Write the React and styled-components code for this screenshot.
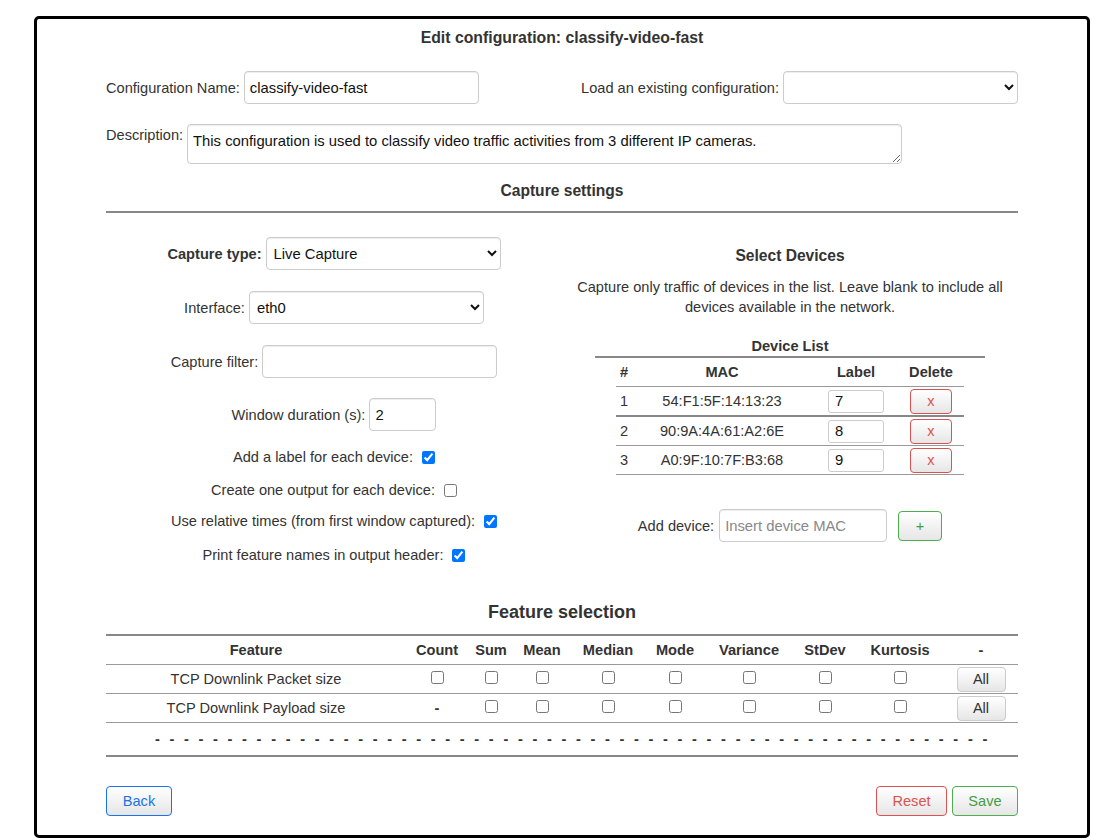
import React from 'react';
import styled, { createGlobalStyle, css } from 'styled-components';

const GlobalStyle = createGlobalStyle`
body {
    margin: 0;
    background: #fff;
    font-family: "Liberation Sans", Arial, sans-serif;
    font-size: 14.6px;
    color: #333;
}
`

const Page = styled.div`
padding: 16px 0 0 34px;
`

const Panel = styled.div`
box-sizing: border-box;
width: 1056px;
height: 822px;
border: 3px solid #000;
border-radius: 5px;
padding: 9px 69px 19px;
display: flex;
flex-direction: column;
`

const Title = styled.h2`
margin: 0;
font-size: 15.8px;
line-height: 20px;
font-weight: bold;
text-align: center;
color: #333;
`

const SectionTitle = styled.h3`
margin: ${p => p.$mt || 0}px 0 0;
font-size: ${p => p.$size || 15.6}px;
line-height: ${p => p.$lh || 20}px;
font-weight: bold;
text-align: center;
color: #333;
`

const Rule = styled.hr`
margin: 10px 0 0;
border: 0;
border-top: 2px solid #888;
`

const TopRow = styled.div`
display: grid;
grid-template-columns: 1fr 1fr;
margin-top: 23px;
`

const Field = styled.div`
display: flex;
align-items: ${p => p.$top ? 'flex-start' : 'center'};
justify-content: ${p => p.$end ? 'flex-end' : p.$center ? 'center' : 'flex-start'};
gap: 4px;
`

const Label = styled.label`
font-size: 14.6px;
font-weight: ${p => p.$bold ? 'bold' : 'normal'};
color: #333;
white-space: nowrap;
${p => p.$top && css`padding-top: 3px;`}
`

const inputBase = css`
box-sizing: border-box;
height: 33px;
border: 1px solid #ccc;
border-radius: 4px;
background: #fff;
box-shadow: inset 0 1px 1px rgba(0, 0, 0, 0.075);
font-family: "Liberation Sans", Arial, sans-serif;
font-size: 14.8px;
color: #111;
padding: 0 5px;
outline: none;
`

const TextInput = styled.input`
${inputBase}
width: ${p => p.$w || 235}px;
&::placeholder {
    color: #888;
}
`

const Select = styled.select`
${inputBase}
width: ${p => p.$w || 235}px;
padding: 0 3px;
`

const TextArea = styled.textarea`
${inputBase}
width: 715px;
height: 40px;
padding: 8px 5px 6px;
resize: vertical;
`

const DescRow = styled.div`
margin-top: 20px;
`

const Columns = styled.div`
display: grid;
grid-template-columns: 1fr 1fr;
margin-top: 24px;
`

const LeftCol = styled.div`
display: flex;
flex-direction: column;
align-items: center;
`

const InputRow = styled(Field)`
margin-top: ${p => p.$mt ?? 21}px;
`

const CheckRow = styled.div`
display: flex;
align-items: center;
justify-content: center;
gap: 9px;
height: 20px;
margin-top: ${p => p.$mt ?? 13}px;
`

const Check = styled.input.attrs({ type: 'checkbox' })`
margin: 0;
width: 13px;
height: 13px;
`

const RightCol = styled.div`
display: flex;
flex-direction: column;
align-items: center;
`

const Note = styled.p`
margin: 11px 0 0;
line-height: 20px;
text-align: center;
width: 440px;
`

const DeviceCaption = styled.div`
margin-top: 19px;
width: 390px;
text-align: center;
font-weight: bold;
line-height: 20px;
border-bottom: 2px solid #888;
`

const DeviceTable = styled.table`
width: 348px;
table-layout: fixed;
border-collapse: collapse;
`

const DTh = styled.th`
height: 28px;
padding: 0;
font-weight: bold;
text-align: ${p => p.$align || 'center'};
padding-left: ${p => p.$pl || 0}px;
padding-right: ${p => p.$pr || 0}px;
width: ${p => p.$w}px;
border-bottom: 1px solid #999;
`

const DTr = styled.tr`
border-bottom: ${p => p.$thick ? '2px solid #888' : '1px solid #999'};
`

const DTd = styled.td`
height: 28px;
padding: 0;
text-align: ${p => p.$align || 'center'};
padding-left: ${p => p.$pl || 0}px;
padding-right: ${p => p.$pr || 0}px;
white-space: nowrap;
`

const SmallInput = styled.input`
box-sizing: border-box;
width: 56px;
height: 23px;
border: 1px solid #ccc;
border-radius: 3px;
font-family: "Liberation Sans", Arial, sans-serif;
font-size: 14.8px;
padding: 0 6px;
color: #111;
vertical-align: middle;
`

const tones = {
    default: { border: '#ccc', color: '#333' },
    blue: { border: '#1a73e8', color: '#1a73e8' },
    red: { border: '#d9534f', color: '#d9534f' },
    green: { border: '#4cae4c', color: '#449d44' },
}

const Button = styled.button`
box-sizing: border-box;
width: ${p => p.$w}px;
height: ${p => p.$h || 30}px;
padding: 0;
border: 1px solid ${p => tones[p.$tone || 'default'].border};
color: ${p => tones[p.$tone || 'default'].color};
border-radius: 4px;
background-image: linear-gradient(to bottom, #fff 0%, #e6e6e6 100%);
font-family: "Liberation Sans", Arial, sans-serif;
font-size: 14.6px;
vertical-align: middle;
cursor: pointer;
`

const AddRow = styled(Field)`
margin-top: 34px;
gap: 5px;
`

const PlusButton = styled(Button)`
margin-left: 6px;
`

const FeatureTable = styled.table`
margin-top: 11px;
width: 100%;
border-collapse: collapse;
border-top: 2px solid #888;
border-bottom: 2px solid #888;
`

const FTh = styled.th`
height: 28px;
padding: 0;
font-weight: bold;
text-align: center;
width: ${p => p.$w}px;
border-bottom: 1px solid #999;
`

const FTr = styled.tr`
border-bottom: 1px solid #999;
`

const FTd = styled.td`
height: 28px;
padding: 0;
text-align: center;
vertical-align: middle;
`

const DotsCell = styled.td`
height: 32px;
padding: 0 30px 0 49px;
`

const Dots = styled.div`
display: flex;
justify-content: space-between;
font-weight: bold;
color: #333;
`

const Footer = styled.div`
display: flex;
justify-content: space-between;
align-items: center;
margin-top: 29px;
`

const FooterRight = styled.div`
display: flex;
gap: 5px;
`

const devices = [
    { mac: '54:F1:5F:14:13:23', label: '7' },
    { mac: '90:9A:4A:61:A2:6E', label: '8' },
    { mac: 'A0:9F:10:7F:B3:68', label: '9' },
]

const columns = [
    { name: 'Feature', w: 300 },
    { name: 'Count', w: 62 },
    { name: 'Sum', w: 46 },
    { name: 'Mean', w: 56 },
    { name: 'Median', w: 76 },
    { name: 'Mode', w: 58 },
    { name: 'Variance', w: 90 },
    { name: 'StDev', w: 62 },
    { name: 'Kurtosis', w: 88 },
    { name: '-', w: 74 },
]

const features = [
    { name: 'TCP Downlink Packet size', count: true },
    { name: 'TCP Downlink Payload size', count: false },
]

export default function App() {
    return (
        <Page>
            <GlobalStyle />
            <Panel>
                <Title>Edit configuration: classify-video-fast</Title>

                <TopRow>
                    <Field>
                        <Label>Configuration Name:</Label>
                        <TextInput defaultValue='classify-video-fast' />
                    </Field>
                    <Field $end>
                        <Label>Load an existing configuration:</Label>
                        <Select defaultValue=''>
                            <option value=''></option>
                        </Select>
                    </Field>
                </TopRow>

                <DescRow>
                    <Field $top>
                        <Label $top>Description:</Label>
                        <TextArea defaultValue='This configuration is used to classify video traffic activities from 3 different IP cameras.' />
                    </Field>
                </DescRow>

                <SectionTitle $mt={17}>Capture settings</SectionTitle>
                <Rule />

                <Columns>
                    <LeftCol>
                        <InputRow $mt={0}>
                            <Label $bold>Capture type:</Label>
                            <Select defaultValue='live'>
                                <option value='live'>Live Capture</option>
                            </Select>
                        </InputRow>
                        <InputRow>
                            <Label>Interface:</Label>
                            <Select defaultValue='eth0'>
                                <option value='eth0'>eth0</option>
                            </Select>
                        </InputRow>
                        <InputRow>
                            <Label>Capture filter:</Label>
                            <TextInput />
                        </InputRow>
                        <InputRow $mt={20}>
                            <Label>Window duration (s):</Label>
                            <TextInput $w={67} defaultValue='2' />
                        </InputRow>
                        <CheckRow $mt={16}>
                            <Label>Add a label for each device:</Label>
                            <Check defaultChecked />
                        </CheckRow>
                        <CheckRow>
                            <Label>Create one output for each device:</Label>
                            <Check />
                        </CheckRow>
                        <CheckRow $mt={11}>
                            <Label>Use relative times (from first window captured):</Label>
                            <Check defaultChecked />
                        </CheckRow>
                        <CheckRow $mt={14}>
                            <Label>Print feature names in output header:</Label>
                            <Check defaultChecked />
                        </CheckRow>
                    </LeftCol>

                    <RightCol>
                        <SectionTitle $mt={9}>Select Devices</SectionTitle>
                        <Note>Capture only traffic of devices in the list. Leave blank to include all devices available in the network.</Note>
                        <DeviceCaption>Device List</DeviceCaption>
                        <DeviceTable>
                            <colgroup>
                                <col style={{ width: 22 }} />
                                <col style={{ width: 168 }} />
                                <col style={{ width: 100 }} />
                                <col style={{ width: 58 }} />
                            </colgroup>
                            <thead>
                                <tr>
                                    <DTh $align='left' $pl={4}>#</DTh>
                                    <DTh>MAC</DTh>
                                    <DTh>Label</DTh>
                                    <DTh $pr={8}>Delete</DTh>
                                </tr>
                            </thead>
                            <tbody>
                                {devices.map((d, i) => (
                                    <DTr key={d.mac} $thick={i === 0}>
                                        <DTd $align='left' $pl={4}>{i + 1}</DTd>
                                        <DTd>{d.mac}</DTd>
                                        <DTd><SmallInput defaultValue={d.label} /></DTd>
                                        <DTd $pr={8}><Button $tone='red' $w={42} $h={25}>x</Button></DTd>
                                    </DTr>
                                ))}
                            </tbody>
                        </DeviceTable>
                        <AddRow>
                            <Label>Add device:</Label>
                            <TextInput $w={168} placeholder='Insert device MAC' />
                            <PlusButton $tone='green' $w={44}>+</PlusButton>
                        </AddRow>
                    </RightCol>
                </Columns>

                <SectionTitle $mt={36} $size={18} $lh={22}>Feature selection</SectionTitle>

                <FeatureTable>
                    <thead>
                        <tr>
                            {columns.map(c => <FTh key={c.name} $w={c.w}>{c.name}</FTh>)}
                        </tr>
                    </thead>
                    <tbody>
                        {features.map(f => (
                            <FTr key={f.name}>
                                <FTd>{f.name}</FTd>
                                <FTd>{f.count ? <Check /> : <b>-</b>}</FTd>
                                {columns.slice(2, 9).map(c => <FTd key={c.name}><Check /></FTd>)}
                                <FTd><Button $w={49} $h={25}>All</Button></FTd>
                            </FTr>
                        ))}
                        <tr>
                            <DotsCell colSpan={columns.length}>
                                <Dots>
                                    {Array.from({ length: 58 }, (_, i) => <span key={i}>-</span>)}
                                </Dots>
                            </DotsCell>
                        </tr>
                    </tbody>
                </FeatureTable>

                <Footer>
                    <Button $tone='blue' $w={66}>Back</Button>
                    <FooterRight>
                        <Button $tone='red' $w={71}>Reset</Button>
                        <Button $tone='green' $w={66}>Save</Button>
                    </FooterRight>
                </Footer>
            </Panel>
        </Page>
    )
}
